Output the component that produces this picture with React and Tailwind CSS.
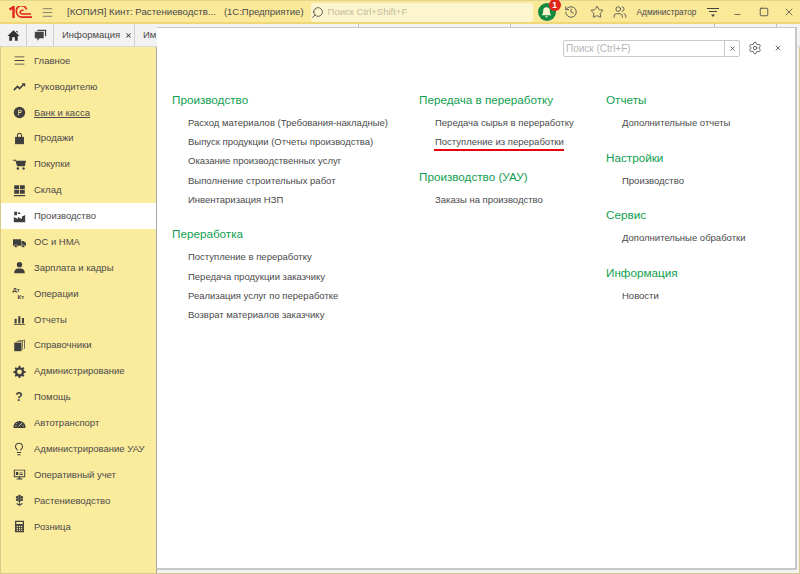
import { Menu, X, Search, History, Star, Users, Minus, Square, Settings, Lightbulb } from "lucide-react";

const Ic = ({ children }) => (
  <svg viewBox="0 0 16 16" className="w-[13px] h-[13px]" fill="#3f3f3f">
    {children}
  </svg>
);

const sidebar = [
  { label: "Главное", icon: <Ic><path d="M2 3h12v1H2zM2 7.500h12v1H2zM2 12h12v1H2z" /></Ic> },
  { label: "Руководителю", icon: <Ic><path d="M1 12.500 5.500 8l2.500 2.500L13 5.500" fill="none" stroke="#3f3f3f" strokeWidth="2" /><path d="M10.500 4H15v4.500z" /></Ic> },
  {
    label: "Банк и касса",
    underline: true,
    icon: (
      <Ic>
        <circle cx="8" cy="8" r="7" />
        <path d="M6.500 4.500h2.200a2 2 0 0 1 0 4H7.500v3h-1zM7.500 5.500v2h1.200a1 1 0 0 0 0-2z" fill="#fbeb9c" />
      </Ic>
    ),
  },
  { label: "Продажи", icon: <Ic><path d="M2.500 6h11v9h-11z" /><path d="M5.500 6V4a2.500 2.500 0 0 1 5 0v2" fill="none" stroke="#3f3f3f" strokeWidth="1.300" /></Ic> },
  { label: "Покупки", icon: <Ic><path d="M0 2h3.500l.500 1.500H16L14.500 10H5L3 3.300H0z" /><circle cx="6" cy="13" r="1.500" /><circle cx="13" cy="13" r="1.500" /></Ic> },
  { label: "Склад", icon: <Ic><path d="M1.500 1.500h6v5h-6zM8.500 1.500h6v5h-6zM1.500 7.500h6v4.500h-6zM8.500 7.500h6v4.500h-6zM1 13.500h14V15H1z" /></Ic> },
  { label: "Производство", active: true, icon: <Ic><path d="M1 15V8.500l5 2.500V8.500l5 2.500V8l4-2v9zM1.500 2h3.500v4.500H1.500zM6 3h3v2H6z" /></Ic> },
  { label: "ОС и НМА", icon: <Ic><path d="M0 4h10v8H0zM10.500 6H13l3 2.500V12h-5.500z" /><circle cx="3.500" cy="12.500" r="1.800" stroke="#fbeb9c" strokeWidth=".6" /><circle cx="12.500" cy="12.500" r="1.800" stroke="#fbeb9c" strokeWidth=".6" /></Ic> },
  { label: "Зарплата и кадры", icon: <Ic><circle cx="8" cy="4.500" r="3.300" /><path d="M1.500 15c0-4 2-5.500 4.500-5.700h4c2.500.200 4.500 1.700 4.500 5.700z" /></Ic> },
  {
    label: "Операции",
    icon: (
      <span className="w-[13px] h-[13px] flex flex-col text-[6px] leading-[6.500px] font-bold text-[#3f3f3f]">
        <span>Дт</span>
        <span className="pl-[5px]">Кт</span>
      </span>
    ),
  },
  { label: "Отчеты", icon: <Ic><path d="M2 7h2.500v6H2zM6.500 4H9v9H6.500zM11 6h2.500v7H11zM1 13.500h14v1H1z" /></Ic> },
  { label: "Справочники", icon: <Ic><path d="M1.500 4.500h9V15h-9z" /><path d="M3.500 3.500 12 2.500V13.500h-.7V3.500L3.500 4zM6 1.800l8.500-1V12h-.9V1.800L6 2.400z" /></Ic> },
  { label: "Администрирование", icon: <Ic><path fillRule="evenodd" d="M7 1h2l.4 2 1.600.7 1.800-1.100 1.200 1.300-1.100 1.700.7 1.600 2 .4v1.900l-2 .4-.7 1.600 1.100 1.800-1.300 1.200-1.700-1.100-1.600.7-.4 2H7l-.4-2-1.600-.7-1.800 1.100L2 13.300l1.100-1.700-.7-1.600-2-.4V7.700l2-.4.7-1.600L2 3.900l1.300-1.200L5 3.800l1.600-.7zM8 5.400a3 3 0 1 0 0 6 3 3 0 0 0 0-6z" /></Ic> },
  { label: "Помощь", icon: <span className="w-[13px] h-[13px] text-center text-[12px] leading-[13px] font-bold text-[#3f3f3f]">?</span> },
  { label: "Автотранспорт", icon: <Ic><path d="M.5 12.500a7.500 7.500 0 0 1 15 0c0 .7-.3 1-1 1h-13c-.7 0-1-.3-1-1z" /><path d="M7 11.500 11.500 7" stroke="#fbeb9c" strokeWidth="1" /><path d="M2.500 11h2M11.500 11h2M4 7.500l1 1" stroke="#fbeb9c" strokeWidth=".8" /></Ic> },
  { label: "Администрирование УАУ", icon: <Lightbulb className="w-[14px] h-[14px] text-[#3f3f3f]" strokeWidth={1.800} /> },
  { label: "Оперативный учет", icon: <Ic><path fillRule="evenodd" d="M1 2h14v9.500H9V13h2.500v1h-7v-1H7v-1.500H1zM2.200 3.200v7.100h11.600V3.200z" /><path d="M3.500 5h3v3.500h-3zM8 5.500h4v1H8zM8 7.500h4v1H8z" /></Ic> },
  { label: "Растениеводство", icon: <Ic><circle cx="8" cy="5.500" r="1.600" /><circle cx="8" cy="2.600" r="1.600" /><circle cx="8" cy="8.400" r="1.600" /><circle cx="5.200" cy="4" r="1.600" /><circle cx="10.800" cy="4" r="1.600" /><circle cx="5.200" cy="7" r="1.600" /><circle cx="10.800" cy="7" r="1.600" /><path d="M7.500 9h1v6h-1zM4 11.500c2 0 3.500.8 4 2.500-2 0-3.500-.8-4-2.500zM12 11.500c-2 0-3.500.8-4 2.500 2 0 3.500-.8 4-2.500z" /></Ic> },
  { label: "Розница", icon: <Ic><path fillRule="evenodd" d="M2.500 1h11v14h-11zM4 2.500v2.500h8V2.500zM4.500 7v1.500H6V7zM7.300 7v1.500h1.500V7zM10 7v1.500h1.500V7zM4.500 9.500V11H6V9.500zM7.300 9.500V11h1.500V9.500zM10 9.500V11h1.500V9.500zM4.500 12v1.500H6V12zM7.300 12v1.500h1.500V12zM10 12v1.500h1.500V12z" /></Ic> },
];

const columns = [
  {
    className: "w-[247px]",
    groups: [
      {
        title: "Производство",
        items: [
          "Расход материалов (Требования-накладные)",
          "Выпуск продукции (Отчеты производства)",
          "Оказание производственных услуг",
          "Выполнение строительных работ",
          "Инвентаризация НЗП",
        ],
      },
      {
        title: "Переработка",
        items: [
          "Поступление в переработку",
          "Передача продукции заказчику",
          "Реализация услуг по переработке",
          "Возврат материалов заказчику",
        ],
      },
    ],
  },
  {
    className: "w-[187px]",
    groups: [
      { title: "Передача в переработку", items: ["Передача сырья в переработку", "Поступление из переработки"] },
      { title: "Производство (УАУ)", items: ["Заказы на производство"] },
    ],
  },
  {
    className: "w-[180px]",
    groups: [
      { title: "Отчеты", items: ["Дополнительные отчеты"] },
      { title: "Настройки", items: ["Производство"] },
      { title: "Сервис", items: ["Дополнительные обработки"] },
      { title: "Информация", items: ["Новости"] },
    ],
  },
];

const App = () => {
  return (
    <div className="w-[800px] h-[574px] overflow-hidden relative flex flex-col bg-[#fbeb9c] text-[#4a4a4a] text-[9.5px] font-['Liberation_Sans',Arial,sans-serif]">
      {/* title bar */}
      <div className="h-[24px] shrink-0 pt-[1px] flex items-center bg-[#fbe99a] border-t border-b-2 border-t-[#e5d58c] border-b-[#efd777]">
        <div className="w-[33px] pl-[9px] flex items-center">
          <svg viewBox="0 0 23 13" className="w-[23px] h-[13px]" fill="none" stroke="#e0231e">
            <path d="M.5 3.500 4.500 1V12" strokeWidth="2.400" />
            <path d="M17.500 3.500A5 5 0 0 0 7.500 6 5.500 5.500 0 0 0 13 11.200H23" strokeWidth="1.700" />
            <path d="M14.500 4.500A2.500 2.500 0 0 0 11 6.500 2.500 2.500 0 0 0 13.500 8H22" strokeWidth="1.500" />
          </svg>
        </div>
        <Menu className="w-[13px] h-[13px] ml-[8px] text-[#555]" strokeWidth={1.300} />
        <span className="ml-[13px] text-[9.7px] whitespace-nowrap">[КОПИЯ] Кинт: Растениеводств...</span>
        <span className="ml-[8px] text-[9.5px] whitespace-nowrap">(1С:Предприятие)</span>
        <div className="ml-[7px] w-[222px] h-[19px] rounded-[2px] bg-[#fdf5cd] flex items-center text-[#c0bba0] text-[9.5px]">
          <Search className="w-[13px] h-[13px] text-[#444] mr-[4px] -scale-x-100" strokeWidth={1.500} />
          Поиск Ctrl+Shift+F
        </div>
        <div className="relative ml-[5px] w-[18px] h-[18px] rounded-full bg-[#12893f] flex items-center justify-center">
          <svg viewBox="0 0 16 16" className="w-[13px] h-[13px]" fill="#fdf5cd">
            <path d="M8 1.500a4 4 0 0 1 4 4c0 3 .8 4.500 2 6H2c1.200-1.500 2-3 2-6a4 4 0 0 1 4-4zM6.500 12.500h3a1.500 1.500 0 0 1-3 0z" />
          </svg>
          <span className="absolute -top-[4px] -right-[5px] w-[12px] h-[12px] rounded-full bg-[#e2231a] text-white text-[8.500px] font-bold leading-[12px] text-center">1</span>
        </div>
        <History className="ml-[8px] w-[14px] h-[14px] text-[#444]" strokeWidth={1.400} />
        <Star className="ml-[12px] w-[14px] h-[14px] text-[#444]" strokeWidth={1.400} />
        <Users className="ml-[9px] w-[14px] h-[14px] text-[#444]" strokeWidth={1.400} />
        <span className="ml-[10px] text-[8.300px] whitespace-nowrap">Администратор</span>
        <svg viewBox="0 0 12 10" className="ml-[11px] w-[12px] h-[10px]" fill="none" stroke="#444">
          <path d="M0 1.500h12M2 4.500h8" />
          <path d="M4 7.500h4L6 10z" fill="#444" stroke="none" />
        </svg>
        <Minus className="ml-[14px] w-[9px] h-[9px] mt-[5px] text-[#444]" strokeWidth={2} />
        <Square className="ml-[17px] w-[10px] h-[10px] text-[#444]" strokeWidth={2} />
        <X className="ml-[14px] w-[12px] h-[12px] text-[#444]" strokeWidth={1.500} />
      </div>

      {/* tabs */}
      <div className="h-[23px] shrink-0 flex bg-[#f2f2f2] border-b border-[#d8d8d8]">
        <div className="w-[27px] border-r border-[#cfcfcf] flex items-center justify-center">
          <svg viewBox="0 0 16 16" className="w-[13px] h-[13px]" fill="#333">
            <path d="M8 1.500 15.500 8.500H13.200V14.500H9.700V10H6.300V14.500H2.800V8.500H.5zM11 2.500h2V5l-2-1.800z" />
          </svg>
        </div>
        <div className="w-[27px] border-r border-[#cfcfcf] flex items-center justify-center">
          <svg viewBox="0 0 16 16" className="w-[13px] h-[13px]" fill="#444">
            <path d="M4 1h11v8h-1.500V2.500H4z" />
            <path d="M1 3.500h11v8H7l-3 3v-3H1z" />
          </svg>
        </div>
        <div className="w-[81px] border-r border-[#cfcfcf] flex items-center pl-[8px] gap-[5px]">
          Информация
          <X className="w-[7px] h-[7px] text-[#333]" strokeWidth={3.500} />
        </div>
        <div className="w-[224px] border-r border-[#bdbdbd] flex items-center pl-[8px]">Им</div>
        <div className="w-[152px] border-r border-[#bdbdbd]" />
        <div className="w-[204px] border-r border-[#bdbdbd]" />
        <div className="w-[62px] border-r border-[#bdbdbd]" />
      </div>

      <div className="flex-1 flex min-h-0">
        {/* sidebar */}
        <nav className="w-[157px] shrink-0 pt-[1px] bg-[#fbeb9c] border-l border-[#d8cb8a] border-r border-r-[#a8a8a0] border-b border-b-[#d8cb8a]">
          {sidebar.map((item) => (
            <div
              key={item.label}
              className={`h-[25.89px] flex items-center pl-[10px] gap-[7px] ${item.active ? "bg-white" : ""}`}
            >
              <span className="w-[16px] h-[16px] flex items-center justify-center">{item.icon}</span>
              <span className={`whitespace-nowrap ${item.underline ? "underline" : ""}`}>{item.label}</span>
            </div>
          ))}
        </nav>
        <div className="flex-1 bg-[#f3f3f3] border-r border-b border-[#d8cb8a]" />
      </div>

      {/* section panel over the tabs */}
      <div className="absolute left-[157px] top-[27px] right-[3px] bottom-[4px] bg-white border-t border-r-2 border-b-2 border-[#c8c8c8] flex flex-col">
        <div className="h-[41px] shrink-0 flex items-start justify-end pt-[12px] pr-[13px]">
          <div className="w-[177px] h-[17px] flex border border-[#c8c8c8] rounded-[2px]">
            <span className="flex-1 pl-[2px] leading-[15px] text-[10px] text-[#b5b5b5]">Поиск (Ctrl+F)</span>
            <span className="w-[15px] border-l border-[#c8c8c8] flex items-center justify-center">
              <X className="w-[7px] h-[7px] text-[#555]" strokeWidth={3} />
            </span>
          </div>
          <Settings className="ml-[8px] w-[14px] h-[14px] mt-[1px] text-[#444]" strokeWidth={1.400} />
          <X className="ml-[12px] w-[8px] h-[8px] mt-[4px] text-[#555]" strokeWidth={2.500} />
        </div>
        <div className="flex pl-[15px] pt-[21px]">
          {columns.map((col, i) => (
            <div key={i} className={`${col.className} flex flex-col gap-[15.500px]`}>
              {col.groups.map((g) => (
                <div key={g.title}>
                  <div className="h-[20px] leading-[20px] text-[11.700px] text-[#10a050] whitespace-nowrap">{g.title}</div>
                  <ul className="mt-[3px] pl-[16px]">
                    {g.items.map((t) => (
                      <li key={t} className="h-[19.200px] leading-[19.200px] whitespace-nowrap relative">
                        {t}
                        {t === "Поступление из переработки" && (
                          <span className="absolute -left-[1px] top-[17px] w-[130px] h-[2px] bg-[#e8000f]" />
                        )}
                      </li>
                    ))}
                  </ul>
                </div>
              ))}
            </div>
          ))}
        </div>
      </div>
    </div>
  );
};

export default App;
